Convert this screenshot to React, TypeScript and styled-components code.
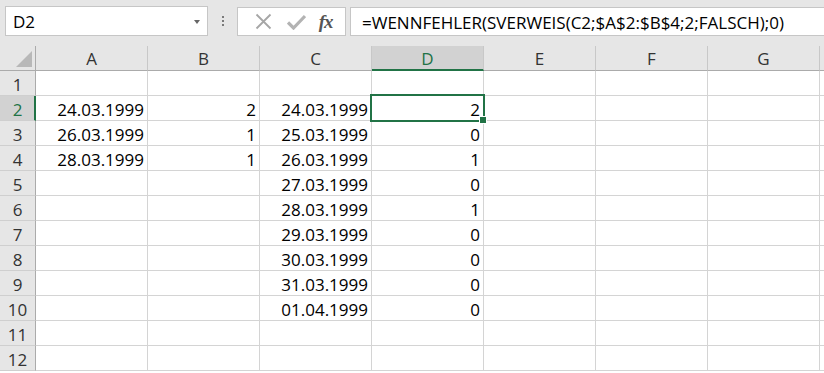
import React from "react";
import styled, { createGlobalStyle } from "styled-components";

const GlobalStyle = createGlobalStyle`
  html, body { margin: 0; padding: 0; background: #ffffff; }
  body { font-family: "Open Sans", "Noto Sans", sans-serif; }
  * { box-sizing: border-box; }
`;

const GREEN = "#217346";
const GRID = "#d4d4d4";

const Window = styled.div`
  width: 824px;
  height: 373px;
  overflow: hidden;
  display: flex;
  flex-direction: column;
  background: #fff;
`;

const FormulaBar = styled.div`
  height: 46px;
  flex: none;
  background: #e6e6e6;
  display: flex;
  align-items: flex-start;
  padding-top: 6px;
  padding-left: 5px;
`;

const NameBox = styled.div`
  width: 203px;
  height: 30px;
  background: #fff;
  border: 1px solid #c6c6c6;
  display: flex;
  align-items: center;
  justify-content: space-between;
  padding: 1px 7px 0 7px;
  font-size: 17px;
  color: #000;
`;

const Caret = styled.div`
  width: 0;
  height: 0;
  border-left: 3px solid transparent;
  border-right: 3px solid transparent;
  border-top: 4px solid #666;
  margin-top: 1px;
`;

const Grip = styled.div`
  width: 29px;
  height: 30px;
  display: flex;
  flex-direction: column;
  align-items: center;
  justify-content: center;
  gap: 2px;
  & > span {
    width: 2px;
    height: 2px;
    background: #7a7a7a;
  }
`;

const Buttons = styled.div`
  width: 109px;
  height: 29px;
  margin-top: 1px;
  background: #fff;
  border: 1px solid #c6c6c6;
  display: flex;
  align-items: center;
  padding-left: 9px;
`;

const IconSlot = styled.div`
  width: 35px;
  height: 27px;
  display: flex;
  align-items: center;
  justify-content: center;
`;

const Fx = styled.span`
  font-family: "Liberation Serif", "DejaVu Serif", serif;
  font-style: italic;
  font-weight: bold;
  font-size: 19px;
  color: #555;
  letter-spacing: -1px;
  margin-left: -6px;
`;

const FormulaInput = styled.div`
  flex: 1;
  height: 29px;
  margin-top: 1px;
  margin-left: 4px;
  background: #fff;
  border: 1px solid #c6c6c6;
  border-right: none;
  display: flex;
  align-items: center;
  padding-left: 11px;
  padding-top: 1px;
  font-size: 17px;
  color: #000;
  white-space: nowrap;
`;

const Sheet = styled.div`
  display: grid;
  grid-template-columns: 36px repeat(7, 112px) 1fr;
  grid-auto-rows: 25px;
  font-size: 17px;
`;

const Corner = styled.div`
  background: #e6e6e6;
  border-right: 1px solid #ababab;
  border-bottom: 1px solid #ababab;
  position: relative;
  &::after {
    content: "";
    position: absolute;
    right: 3px;
    bottom: 3px;
    width: 0;
    height: 0;
    border-left: 16px solid transparent;
    border-bottom: 16px solid #b8b8b8;
  }
`;

const ColHead = styled.div<{ $active?: boolean }>`
  background: ${(p) => (p.$active ? "#d2d2d2" : "#e6e6e6")};
  color: ${(p) => (p.$active ? GREEN : "#333")};
  border-bottom: ${(p) => (p.$active ? `2px solid ${GREEN}` : "1px solid #ababab")};
  border-right: 1px solid #c8c8c8;
  display: flex;
  align-items: center;
  justify-content: center;
  padding-top: ${(p) => (p.$active ? "2px" : "1px")};
`;

const RowHead = styled.div<{ $active?: boolean }>`
  background: ${(p) => (p.$active ? "#d2d2d2" : "#e6e6e6")};
  color: ${(p) => (p.$active ? GREEN : "#333")};
  border-right: ${(p) => (p.$active ? `2px solid ${GREEN}` : "1px solid #ababab")};
  border-bottom: 1px solid #cfcfcf;
  display: flex;
  align-items: center;
  justify-content: center;
  padding-top: 2px;
  padding-left: ${(p) => (p.$active ? "1px" : "0")};
`;

const Cell = styled.div<{ $selected?: boolean }>`
  border-right: 1px solid ${GRID};
  border-bottom: 1px solid ${GRID};
  display: flex;
  align-items: center;
  justify-content: flex-end;
  padding-right: 3px;
  padding-top: 2px;
  color: #000;
  white-space: nowrap;
  position: relative;
  ${(p) =>
    p.$selected &&
    `
    &::before {
      content: "";
      position: absolute;
      left: -2px;
      top: -2px;
      right: -2px;
      bottom: -2px;
      border: 2px solid ${GREEN};
      z-index: 2;
    }
    &::after {
      content: "";
      position: absolute;
      right: -4px;
      bottom: -4px;
      width: 6px;
      height: 6px;
      background: ${GREEN};
      border: 1px solid #fff;
      z-index: 3;
    }
  `}
`;

const FillCell = styled.div`
  border-bottom: 1px solid ${GRID};
`;

const FillHead = styled.div`
  background: #e6e6e6;
  border-bottom: 1px solid #ababab;
`;

const cols = ["A", "B", "C", "D", "E", "F", "G"];

const data: Record<number, string[]> = {
  2: ["24.03.1999", "2", "24.03.1999", "2"],
  3: ["26.03.1999", "1", "25.03.1999", "0"],
  4: ["28.03.1999", "1", "26.03.1999", "1"],
  5: ["", "", "27.03.1999", "0"],
  6: ["", "", "28.03.1999", "1"],
  7: ["", "", "29.03.1999", "0"],
  8: ["", "", "30.03.1999", "0"],
  9: ["", "", "31.03.1999", "0"],
  10: ["", "", "01.04.1999", "0"],
};

export default function App() {
  const rows = Array.from({ length: 12 }, (_, i) => i + 1);
  return (
    <Window>
      <GlobalStyle />
      <FormulaBar>
        <NameBox>
          <span>D2</span>
          <Caret />
        </NameBox>
        <Grip>
          <span />
          <span />
          <span />
        </Grip>
        <Buttons>
          <IconSlot>
            <svg width="17" height="17" viewBox="0 0 17 17">
              <path d="M1.5 1.5 L15.5 15.5 M15.5 1.5 L1.5 15.5" stroke="#a6a6a6" strokeWidth="1.8" fill="none" />
            </svg>
          </IconSlot>
          <IconSlot>
            <svg width="19" height="16" viewBox="0 0 19 16">
              <path d="M1 8.5 L6.5 14 L18 2" stroke="#b3b3b3" strokeWidth="3.2" fill="none" />
            </svg>
          </IconSlot>
          <IconSlot>
            <Fx>fx</Fx>
          </IconSlot>
        </Buttons>
        <FormulaInput>=WENNFEHLER(SVERWEIS(C2;$A$2:$B$4;2;FALSCH);0)</FormulaInput>
      </FormulaBar>
      <Sheet>
        <Corner />
        {cols.map((c) => (
          <ColHead key={c} $active={c === "D"}>
            {c}
          </ColHead>
        ))}
        <FillHead />
        {rows.map((r) => (
          <React.Fragment key={r}>
            <RowHead $active={r === 2}>{r}</RowHead>
            {cols.map((c, ci) => (
              <Cell key={c} $selected={r === 2 && c === "D"}>
                {data[r]?.[ci] ?? ""}
              </Cell>
            ))}
            <FillCell />
          </React.Fragment>
        ))}
      </Sheet>
    </Window>
  );
}
